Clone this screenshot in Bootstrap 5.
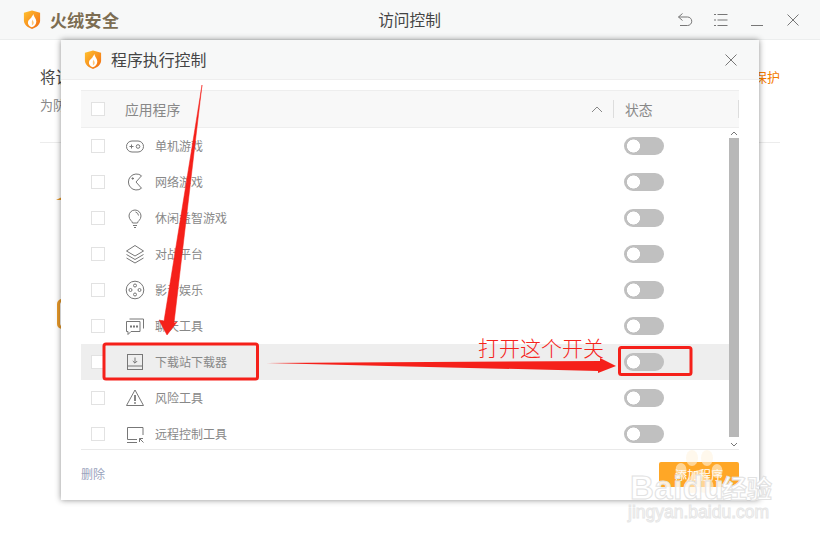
<!DOCTYPE html>
<html lang="zh-CN">
<head>
<meta charset="utf-8">
<title>访问控制</title>
<link href="https://cdn.jsdelivr.net/npm/bootstrap@5.3.0/dist/css/bootstrap.min.css" rel="stylesheet">
<style>
html,body{height:100%}
body{width:820px;height:540px;overflow:hidden;position:relative;background:#fff;font-family:"Noto Sans CJK SC","Liberation Sans",sans-serif;color:#555}
.topbar{height:40px;background:#f7f8f8;border-bottom:1px solid #eceeee;padding:0 19px 0 23px}
.topbar-left{width:197px;gap:9px}
.topbar-right{width:202px;gap:20px}
.brand-name{font-size:17px;font-weight:700;color:#7c6d52;letter-spacing:.3px;line-height:1}
.win-title{font-size:15.7px;color:#444;line-height:1}
.win-icon{display:block;color:#777}
.behind{padding:26px 40px 0}
.behind-head{font-size:15.500px;color:#444;line-height:20px}
.behind-prot{font-size:13px;color:#f57c00;line-height:20px;margin-top:1px}
.behind-sub{font-size:13px;color:#888;line-height:18px;margin-top:9px}
.behind-rule{border-top:1px solid #ececec;margin-top:28px}
.behind-mark1{width:12px;height:6px;margin:51px 0 0 16px;background:#e7992a;clip-path:polygon(0 100%,100% 0,100% 100%)}
.behind-mark2{width:30px;height:30px;margin:99px 0 0 17px;border:3px solid #e7992a;border-radius:5px}
.dlg{position:absolute;left:61px;top:40px;width:698px;height:460px;background:#fff;box-shadow:0 0 6px rgba(0,0,0,.45)}
.dlg-head{height:40px;background:#f7f8f8;border-bottom:1px solid #eeeeee;padding:0 21px 0 23px}
.dlg-title{font-size:15.9px;color:#444;line-height:1;margin-left:9px}
.grid-wrap{margin:10px 20px 0}
.grid-head{height:38px;background:#f8f8f8;border-top:1px solid #eee;border-bottom:1px solid #eee;font-size:13.8px;color:#888;padding-left:10px}
.col-name{width:488px;margin-left:20px;padding-right:10px;flex:none}
.sep{width:1px;height:18px;background:#ddd;flex:none}
.col-state{width:124px;padding-left:11px;flex:none}
.chk.form-check-input{width:14px;height:14px;margin:0;border:1px solid #e2e2e2;border-radius:0;background-color:#fff;flex:none}
.grid-body{height:322px;overflow:hidden;border-bottom:1px solid #e9e9e9;position:relative}
.grid-row{height:36px;padding-left:10px;font-size:12px;color:#888}
.grid-row.is-hot{background:#eeeeee;width:648px}
.row-icon{width:20px;height:20px;margin-left:20px;flex:none;color:#777}
.row-name{width:469px;margin-left:10px;padding-bottom:1px}
.tog.form-check-input{width:40px;height:18px;margin:0;border:0;border-radius:9px;background-color:#c0c0c0;background-image:radial-gradient(circle at 9.500px 9px,#fff 6.200px,transparent 6.800px);background-size:auto;flex:none}
.scroll-track{position:absolute;right:0;top:0;bottom:0;width:10px;background:#fff}
.scroll-thumb{position:absolute;top:10px;left:0;width:10px;height:299px;background:#b8b8b8}
.scroll-arrow{position:absolute;left:1px;display:block}
.scroll-up{top:3px}
.scroll-down{top:314px}
.dlg-foot{padding:12px 0 0}
.del-link{font-size:12px;color:#9aa3bd;text-decoration:none;line-height:24px}
.add-btn.btn{width:80px;height:25px;padding:0;background:#ffa726;border:0;border-radius:2px;color:#fff;font-size:12px;line-height:25px}
.mark-layer{position:absolute;left:0;top:0;width:820px;height:540px;pointer-events:none}
.call-note{position:absolute;left:478px;top:333px;font-size:21px;line-height:28px;font-weight:300;color:#f5241c;white-space:nowrap}
.wm-band{position:absolute;left:659px;top:487px;width:80px;height:13px;background:#fff}
.wm-main{position:absolute;left:630px;top:469px;font:700 33px/38px "Liberation Sans",sans-serif;color:rgba(255,255,255,.85);-webkit-text-stroke:1px #e2e2e2;letter-spacing:.5px;white-space:nowrap}
.wm-cn{position:absolute;left:722px;top:472px;font-size:25px;line-height:30px;font-weight:700;color:#fff;-webkit-text-stroke:1px #e2e2e2;white-space:nowrap}
.wm-url{position:absolute;left:628px;top:501px;font:400 17.500px/22px "Liberation Sans",sans-serif;color:#fff;-webkit-text-stroke:1px #e6e6e6;white-space:nowrap}
</style>
</head>
<body>
<svg width="0" height="0" class="position-absolute">
  <defs>
    <linearGradient id="shieldFill" x1="0" y1="0" x2="1" y2="1">
      <stop offset="0" stop-color="#ffc22e"/><stop offset="1" stop-color="#f26a12"/>
    </linearGradient>
    <symbol id="shield" viewBox="0 0 20 22">
      <path d="M1 3.500 10 1l9 2.500v8.500c0 4.600-4 7.600-9 9.500-5-1.900-9-4.900-9-9.500z" fill="url(#shieldFill)"/>
      <path d="M11.500 5c.5 3 3.300 5 3.300 8.300 0 3-2.300 5.700-5 6.200-2.900-.6-4.700-3-4.300-5.800.4-2.500 2.700-3.300 3.800-5C10 7.500 11 6.500 11.500 5z" fill="#fff"/>
      <path d="M10.500 11c.2 1.500 1.600 2.400 1.400 4-.2 1.500-1.100 2.300-2.100 2.600.6-2.300-.7-3.300.7-6.600z" fill="#ffc77a"/>
    </symbol>
  </defs>
</svg>

<header class="topbar d-flex align-items-center justify-content-between">
  <div class="topbar-left d-flex align-items-center">
    <svg width="18" height="21"><use href="#shield"/></svg>
    <span class="brand-name">火绒安全</span>
  </div>
  <div class="win-title">访问控制</div>
  <div class="topbar-right d-flex align-items-center justify-content-end">
    <svg class="win-icon" width="16" height="16" viewBox="0 0 16 16" fill="none" stroke="currentColor"><path d="M5.500 1.500 1.500 5l4 3.500M1.500 5h9a3.800 3.800 0 0 1 0 8.500H3"/></svg>
    <svg class="win-icon" width="16" height="16" viewBox="0 0 16 16" fill="none" stroke="currentColor"><path d="M4.500 2.500H14.500M4.500 8H14.500M4.500 13.500H14.500M1 2.500h2M1 8h2M1 13.500h2"/></svg>
    <svg class="win-icon" width="16" height="16" viewBox="0 0 16 16" fill="none" stroke="currentColor"><path d="M2 13.500H14"/></svg>
    <svg class="win-icon" width="16" height="16" viewBox="0 0 16 16" fill="none" stroke="currentColor"><path d="M2.500 2.500 13.500 13.500M13.500 2.500 2.500 13.500"/></svg>
  </div>
</header>

<main class="behind">
  <div class="d-flex justify-content-between">
    <span class="behind-head">将该程序加入</span>
    <span class="behind-prot">保护</span>
  </div>
  <div class="behind-sub">为防止</div>
  <div class="behind-rule"></div>
  <div class="behind-mark1"></div>
  <div class="behind-mark2"></div>
</main>

<section class="dlg d-flex flex-column">
  <div class="dlg-head d-flex align-items-center">
    <svg width="18" height="21"><use href="#shield"/></svg>
    <span class="dlg-title">程序执行控制</span>
    <svg class="win-icon ms-auto" width="14" height="14" viewBox="0 0 14 14" fill="none" stroke="currentColor"><path d="M1.500 1.500 12.500 12.500M12.500 1.500 1.500 12.500"/></svg>
  </div>
  <div class="grid-wrap">
    <div class="grid-head d-flex align-items-center">
      <input class="chk form-check-input" type="checkbox" aria-label="全选">
      <div class="col-name d-flex align-items-center justify-content-between">
        <span>应用程序</span>
        <svg width="12" height="8" viewBox="0 0 12 8" fill="none" stroke="#888"><path d="M1 7 6 2l5 5"/></svg>
      </div>
      <span class="sep"></span>
      <div class="col-state">状态</div>
      <span class="sep"></span>
    </div>
    <div class="grid-body">
      <div class="grid-row d-flex align-items-center">
        <input class="chk form-check-input" type="checkbox" aria-label="单机游戏">
        <svg class="row-icon" viewBox="0 0 20 20" fill="none" stroke="currentColor"><rect x="1.500" y="5" width="17" height="11" rx="5.500"/><path d="M4.500 10.500h4M6.500 8.500v4"/><circle cx="13" cy="10.500" r="1.800"/></svg>
        <span class="row-name">单机游戏</span>
        <input class="tog form-check-input" type="checkbox" role="switch" aria-label="单机游戏开关">
      </div>
      <div class="grid-row d-flex align-items-center">
        <input class="chk form-check-input" type="checkbox" aria-label="网络游戏">
        <svg class="row-icon" viewBox="0 0 20 20" fill="none" stroke="currentColor"><path d="M16.500 3.800A8 8 0 1 0 16.500 16.200L11 10z"/><path d="M6.500 6.500h2.500M7.700 5.300v2.400"/></svg>
        <span class="row-name">网络游戏</span>
        <input class="tog form-check-input" type="checkbox" role="switch" aria-label="网络游戏开关">
      </div>
      <div class="grid-row d-flex align-items-center">
        <input class="chk form-check-input" type="checkbox" aria-label="休闲益智游戏">
        <svg class="row-icon" viewBox="0 0 20 20" fill="none" stroke="currentColor"><path d="M7.500 15c0-2-3.500-3-3.500-7a6 6 0 0 1 12 0c0 4-3.500 5-3.500 7z"/><path d="M8 17.500h4M9 19.500h2M10.500 4a4 4 0 0 1 3 3.500"/></svg>
        <span class="row-name">休闲益智游戏</span>
        <input class="tog form-check-input" type="checkbox" role="switch" aria-label="休闲益智游戏开关">
      </div>
      <div class="grid-row d-flex align-items-center">
        <input class="chk form-check-input" type="checkbox" aria-label="对战平台">
        <svg class="row-icon" viewBox="0 0 20 20" fill="none" stroke="currentColor"><path d="M10 1.500 1.500 7 10 12l8.500-5zM1.500 10.500 10 15.500l8.500-5M1.500 14 10 19l8.500-5"/></svg>
        <span class="row-name">对战平台</span>
        <input class="tog form-check-input" type="checkbox" role="switch" aria-label="对战平台开关">
      </div>
      <div class="grid-row d-flex align-items-center">
        <input class="chk form-check-input" type="checkbox" aria-label="影音娱乐">
        <svg class="row-icon" viewBox="0 0 20 20" fill="none" stroke="currentColor"><circle cx="10" cy="10" r="8.800"/><circle cx="10" cy="5.500" r="1.500"/><circle cx="5.500" cy="10" r="1.500"/><circle cx="14.500" cy="10" r="1.500"/><circle cx="10" cy="14.500" r="1.500"/></svg>
        <span class="row-name">影音娱乐</span>
        <input class="tog form-check-input" type="checkbox" role="switch" aria-label="影音娱乐开关">
      </div>
      <div class="grid-row d-flex align-items-center">
        <input class="chk form-check-input" type="checkbox" aria-label="聊天工具">
        <svg class="row-icon" viewBox="0 0 20 20" fill="none" stroke="currentColor"><path d="M1.500 5.500h13.500v10H6L3 18.500V15.500H1.500z"/><path d="M4.500 3h14v9.500"/><path d="M5 10.500h2M8 10.500h2M11 10.500h2" stroke-width="1.800"/></svg>
        <span class="row-name">聊天工具</span>
        <input class="tog form-check-input" type="checkbox" role="switch" aria-label="聊天工具开关">
      </div>
      <div class="grid-row is-hot d-flex align-items-center">
        <input class="chk form-check-input" type="checkbox" aria-label="下载站下载器">
        <svg class="row-icon" viewBox="0 0 20 20" fill="none" stroke="currentColor"><rect x="2.500" y="2.500" width="15" height="15"/><path d="M2.500 14h15M10 5.500v5.500M7.800 9l2.200 2.200L12.200 9"/></svg>
        <span class="row-name">下载站下载器</span>
        <input class="tog form-check-input" type="checkbox" role="switch" aria-label="下载站下载器开关">
      </div>
      <div class="grid-row d-flex align-items-center">
        <input class="chk form-check-input" type="checkbox" aria-label="风险工具">
        <svg class="row-icon" viewBox="0 0 20 20" fill="none" stroke="currentColor"><path d="M10 2 18.500 17.500H1.500z"/><path d="M10 7v6" stroke-width="1.800"/><path d="M10 14.200v1.600" stroke-width="1.800"/></svg>
        <span class="row-name">风险工具</span>
        <input class="tog form-check-input" type="checkbox" role="switch" aria-label="风险工具开关">
      </div>
      <div class="grid-row d-flex align-items-center">
        <input class="chk form-check-input" type="checkbox" aria-label="远程控制工具">
        <svg class="row-icon" viewBox="0 0 20 20" fill="none" stroke="currentColor"><path d="M12 15.500H2.500V3.500H18V11M2 18.500h10M14.500 14.500l4 4M14.500 14.500h3.500M14.500 14.500V18"/></svg>
        <span class="row-name">远程控制工具</span>
        <input class="tog form-check-input" type="checkbox" role="switch" aria-label="远程控制工具开关">
      </div>
      <div class="scroll-track">
        <svg class="scroll-arrow scroll-up" width="8" height="5" viewBox="0 0 8 5" fill="none" stroke="#777"><path d="M1 4 4 1l3 3"/></svg>
        <div class="scroll-thumb"></div>
        <svg class="scroll-arrow scroll-down" width="8" height="5" viewBox="0 0 8 5" fill="none" stroke="#777"><path d="M1 1l3 3 3-3"/></svg>
      </div>
    </div>
    <div class="dlg-foot d-flex align-items-start justify-content-between">
      <a class="del-link" href="#">删除</a>
      <button class="add-btn btn" type="button">添加程序</button>
    </div>
  </div>
</section>

<svg class="mark-layer" viewBox="0 0 820 540" fill="none">
  <path d="M202 85 174 323 177 322 167 335 159 320 164 321Z" fill="#f5201a" stroke="#f5201a" stroke-width=".5"/>
  <rect x="104" y="344" width="153.500" height="35" rx="2" stroke="#f5201a" stroke-width="3"/>
  <rect x="619.500" y="347.500" width="71.500" height="27" rx="2" stroke="#f5201a" stroke-width="3"/>
  <path d="M266 363 600 361 600 358 616 366 598 373 598 371Z" fill="#f5201a"/>
</svg>
<div class="call-note">打开这个开关</div>

<div class="wm-band"></div>
<svg class="mark-layer" viewBox="0 0 820 540">
  <g fill="#fff3df" fill-opacity=".6">
    <ellipse cx="692" cy="458" rx="6" ry="8"/>
    <ellipse cx="707" cy="458" rx="6" ry="8"/>
    <ellipse cx="681" cy="470" rx="5.500" ry="7"/>
    <ellipse cx="717" cy="471" rx="5.500" ry="7"/>
    <path d="M699 470c6 0 7 6 12 10 5 5 2 13-5 13-3 0-5-1-7-1-3 0-4 1-7 1-7 0-10-8-5-13 5-4 6-10 12-10z"/>
  </g>
</svg>
<div class="wm-main">Baidu</div>
<div class="wm-cn">经验</div>
<div class="wm-url">jingyan.baidu.com</div>
</body>
</html>
